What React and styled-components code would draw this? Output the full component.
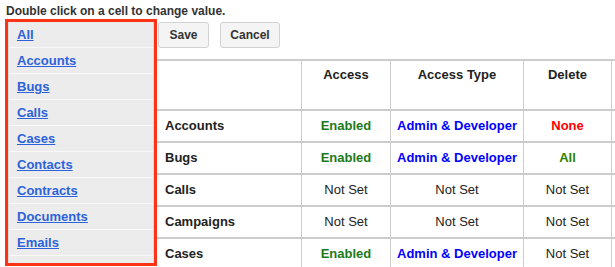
import React from 'react';
import styled, { createGlobalStyle } from 'styled-components';

const GlobalStyle = createGlobalStyle`
  html, body {
    margin: 0;
    padding: 0;
    background: #fff;
    font-family: "Liberation Sans", Arial, sans-serif;
    overflow: hidden;
  }
`;

const Page = styled.div`
  padding: 4px 0 0 5px;
  width: 610px;
  height: 263px;
  overflow: hidden;
`;

const Hint = styled.div`
  font-size: 12px;
  font-weight: bold;
  line-height: 15px;
  color: #333;
  margin-left: 1px;
`;

const Layout = styled.div`
  display: flex;
  align-items: flex-start;
`;

const ModuleMenu = styled.div`
  flex: none;
  box-sizing: border-box;
  width: 152px;
  height: 247px;
  border: 3px solid #fb3418;
  overflow: hidden;
`;

const MenuList = styled.ul`
  list-style: none;
  margin: 0;
  padding: 0;
  background: #ececec;
  border-left: 1px solid #d9d9d9;
  border-right: 1px solid #d9d9d9;
`;

const MenuItem = styled.li`
  height: 25px;
  display: flex;
  align-items: center;
  padding-left: 8px;
  border-bottom: 1px solid #f9f9f9;
`;

const MenuLink = styled.a`
  font-size: 13px;
  font-weight: bold;
  color: #2c62db;
  text-decoration: underline;
  cursor: pointer;
`;

const Main = styled.div`
  flex: 1;
  min-width: 0;
  overflow: hidden;
`;

const Toolbar = styled.div`
  display: flex;
  gap: 11px;
  padding: 3px 0 0 1px;
  margin-bottom: 11px;
`;

const Button = styled.button`
  box-sizing: border-box;
  width: ${({ $w }) => $w}px;
  height: 26px;
  background: #f4f4f4;
  border: 1px solid #d2d2d2;
  border-radius: 3px;
  font-family: inherit;
  font-size: 12px;
  font-weight: bold;
  color: #333;
  padding: 0;
`;

const Table = styled.table`
  table-layout: fixed;
  width: 542px;
  border-collapse: separate;
  border-spacing: 0;
  border-top: 2px solid #cccccc;
`;

const HeadCell = styled.th`
  box-sizing: border-box;
  padding: 6px 4px 26px;
  line-height: 16px;
  font-size: 13px;
  font-weight: bold;
  color: #222;
  text-align: center;
  vertical-align: top;
  border-bottom: 2px solid #cccccc;
  border-left: ${({ $first }) => ($first ? 'none' : '1px solid #cccccc')};
`;

const NameCell = styled.td`
  padding: 7px 8px;
  line-height: 16px;
  font-size: 13px;
  font-weight: bold;
  color: #222;
  text-align: left;
  border-bottom: 2px solid #cccccc;
  white-space: nowrap;
`;

const tones = {
  enabled: { color: '#1c7a1c', weight: 'bold' },
  admin: { color: '#0000ff', weight: 'bold' },
  none: { color: '#ff0000', weight: 'bold' },
  all: { color: '#2a8400', weight: 'bold' },
  notset: { color: '#222', weight: 'normal' },
  blank: { color: '#222', weight: 'normal' },
};

const ValueCell = styled.td`
  padding: 7px 2px;
  height: 16px;
  line-height: 16px;
  font-size: 13px;
  text-align: center;
  white-space: nowrap;
  color: ${({ $tone }) => tones[$tone].color};
  font-weight: ${({ $tone }) => tones[$tone].weight};
  border-bottom: 2px solid #cccccc;
  border-left: 1px solid #cccccc;
`;

const modules = ['All', 'Accounts', 'Bugs', 'Calls', 'Cases', 'Contacts', 'Contracts', 'Documents', 'Emails', 'Employees'];

// the fifth column is cut by the window edge, only its left border shows
const columns = ['Access', 'Access Type', 'Delete', ''];

const labels = {
  enabled: 'Enabled',
  admin: 'Admin & Developer',
  none: 'None',
  all: 'All',
  notset: 'Not Set',
  blank: '',
};

const rows = [
  { name: 'Accounts', values: ['enabled', 'admin', 'none', 'blank'] },
  { name: 'Bugs', values: ['enabled', 'admin', 'all', 'blank'] },
  { name: 'Calls', values: ['notset', 'notset', 'notset', 'blank'] },
  { name: 'Campaigns', values: ['notset', 'notset', 'notset', 'blank'] },
  { name: 'Cases', values: ['enabled', 'admin', 'notset', 'blank'] },
];

export default function App() {
  return (
    <>
      <GlobalStyle />
      <Page>
        <Hint>Double click on a cell to change value.</Hint>
        <Layout>
          <ModuleMenu>
            <MenuList>
              {modules.map((m) => (
                <MenuItem key={m}>
                  <MenuLink>{m}</MenuLink>
                </MenuItem>
              ))}
            </MenuList>
          </ModuleMenu>
          <Main>
            <Toolbar>
              <Button $w={51}>Save</Button>
              <Button $w={60}>Cancel</Button>
            </Toolbar>
            <Table>
              <colgroup>
                <col style={{ width: 144 }} />
                <col style={{ width: 89 }} />
                <col style={{ width: 133 }} />
                <col style={{ width: 88 }} />
                <col style={{ width: 88 }} />
              </colgroup>
              <thead>
                <tr>
                  <HeadCell $first />
                  {columns.map((c, i) => (
                    <HeadCell key={i}>{c}</HeadCell>
                  ))}
                </tr>
              </thead>
              <tbody>
                {rows.map((r) => (
                  <tr key={r.name}>
                    <NameCell>{r.name}</NameCell>
                    {r.values.map((v, i) => (
                      <ValueCell key={i} $tone={v}>
                        {labels[v]}
                      </ValueCell>
                    ))}
                  </tr>
                ))}
              </tbody>
            </Table>
          </Main>
        </Layout>
      </Page>
    </>
  );
}
